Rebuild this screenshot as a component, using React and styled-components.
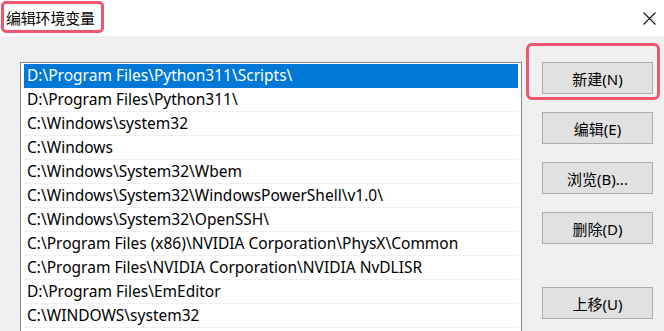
import styled, { createGlobalStyle } from "styled-components";

const GlobalStyle = createGlobalStyle`
    html, body {
        margin: 0;
        padding: 0;
        background: #f0f0f0;
    }
    body {
        font-family: "Noto Sans", "Noto Sans CJK SC", sans-serif;
    }
`;

const paths = [
    "D:\\Program Files\\Python311\\Scripts\\",
    "D:\\Program Files\\Python311\\",
    "C:\\Windows\\system32",
    "C:\\Windows",
    "C:\\Windows\\System32\\Wbem",
    "C:\\Windows\\System32\\WindowsPowerShell\\v1.0\\",
    "C:\\Windows\\System32\\OpenSSH\\",
    "C:\\Program Files (x86)\\NVIDIA Corporation\\PhysX\\Common",
    "C:\\Program Files\\NVIDIA Corporation\\NVIDIA NvDLISR",
    "D:\\Program Files\\EmEditor",
    "C:\\WINDOWS\\system32",
    "",
];

const buttons = [
    { label: "新建(N)", marked: true },
    { label: "编辑(E)" },
    { label: "浏览(B)..." },
    { label: "删除(D)" },
    { label: "上移(U)", spaced: true },
];

const App = () => {
    return (
        <StyledWindow>
            <GlobalStyle />
            <div className="titlebar">
                <div className="titlebar__title">编辑环境变量</div>
                <button className="titlebar__close" aria-label="关闭">
                    <svg width="13" height="13" viewBox="0 0 13 13">
                        <path d="M0.5 0.5 L12.5 12.5 M12.5 0.5 L0.5 12.5" stroke="#111" strokeWidth="1.1" fill="none" />
                    </svg>
                </button>
            </div>
            <div className="body">
                <PathList>
                    {paths.map((p, i) => (
                        <PathRow key={i} $selected={i === 0}>
                            {p}
                        </PathRow>
                    ))}
                </PathList>
                <div className="actions">
                    {buttons.map((b) => (
                        <ActionButton key={b.label} $marked={b.marked} $spaced={b.spaced}>
                            {b.label}
                        </ActionButton>
                    ))}
                </div>
            </div>
        </StyledWindow>
    );
};

const StyledWindow = styled.div`
    width: 664px;
    height: 331px;
    overflow: hidden;
    background: #f0f0f0;
    color: #000;
    font-size: 15px;
    .titlebar {
        height: 36px;
        background: #fff;
        display: flex;
        align-items: center;
        justify-content: space-between;
        .titlebar__title {
            position: relative;
            margin-left: 6px;
            font-size: 15px;
            line-height: 20px;
            letter-spacing: -0.2px;
            &::after {
                content: "";
                position: absolute;
                left: -5px;
                top: -7px;
                width: 103px;
                height: 32px;
                border: 3px solid #f0566e;
                border-radius: 5px;
                box-sizing: border-box;
            }
        }
        .titlebar__close {
            width: 40px;
            height: 36px;
            margin-right: -5px;
            border: none;
            background: transparent;
            display: flex;
            align-items: center;
            justify-content: center;
            padding: 0;
        }
    }
    .body {
        display: flex;
        align-items: flex-start;
        padding: 26px 11px 0 20px;
        gap: 20px;
    }
    .actions {
        display: flex;
        flex-direction: column;
        gap: 18px;
    }
`;

const PathList = styled.div`
    width: 502px;
    height: 300px;
    box-sizing: border-box;
    border: 1px solid #828790;
    background: #fff;
    padding: 1px 3px 0 3px;
    display: flex;
    flex-direction: column;
`;

const PathRow = styled.div`
    height: 23px;
    flex: none;
    line-height: 22px;
    padding-left: 3px;
    font-size: 15.5px;
    border-bottom: 1px solid ${(p) => (p.$selected ? "#0078d7" : "#f0f0f0")};
    background: ${(p) => (p.$selected ? "#0078d7" : "#fff")};
    color: ${(p) => (p.$selected ? "#fff" : "#000")};
    white-space: nowrap;
`;

const ActionButton = styled.button`
    position: relative;
    width: 111px;
    height: 32px;
    margin-top: ${(p) => (p.$spaced ? "25px" : "0")};
    border: 1px solid #adadad;
    background: #e1e1e1;
    font-family: "Noto Sans", "Noto Sans CJK SC", sans-serif;
    font-size: 15px;
    color: #000;
    padding: 0;
    &::after {
        content: "";
        display: ${(p) => (p.$marked ? "block" : "none")};
        position: absolute;
        left: -17px;
        top: -20px;
        right: -8px;
        bottom: -7px;
        border: 3px solid #f0566e;
        border-radius: 6px;
    }
`;

export default App;
